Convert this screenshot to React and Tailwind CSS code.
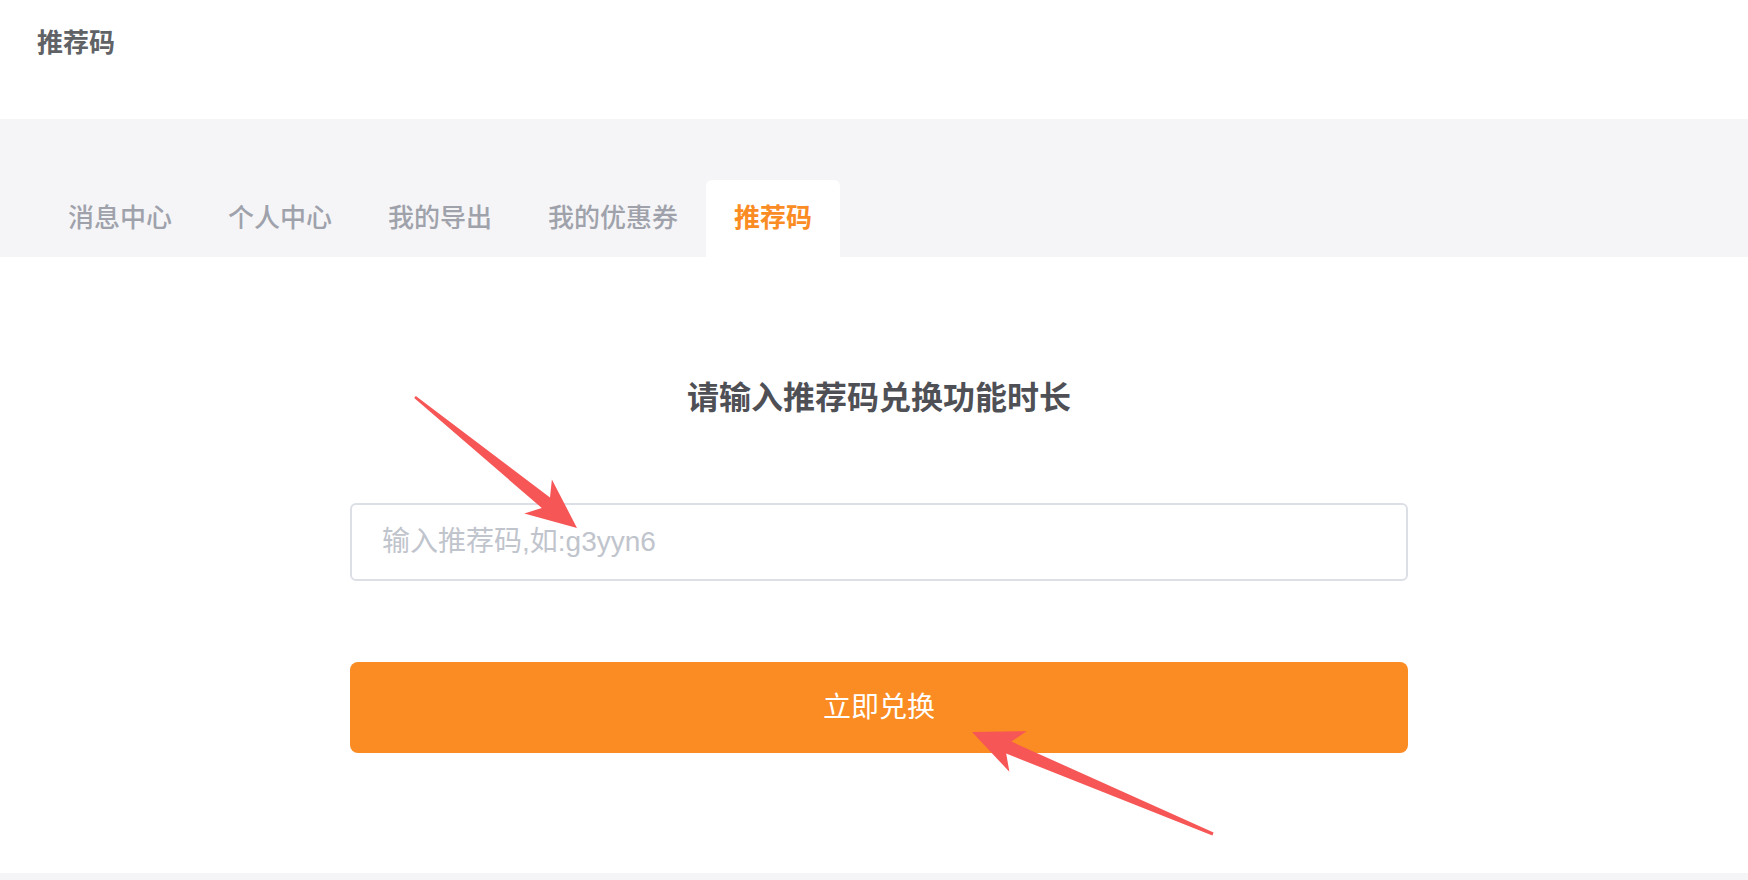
import { useState } from "react";

const tabs = ["消息中心", "个人中心", "我的导出", "我的优惠券", "推荐码"];

function Arrows() {
  // red annotation arrows drawn over the page
  return (
    <svg className="absolute inset-0 pointer-events-none" width="1748" height="880" viewBox="0 0 1748 880">
      <polygon
        fill="#f75656"
        points="414.2,398.1 541.8,508 524.3,513.6 577,528 551.9,479.4 550,497.6 415.8,395.9"
      />
      <polygon
        fill="#f75656"
        points="1213.6,832.6 1011.4,741.6 1026.6,731.2 972,732 1009.4,771.8 1006.2,753.6 1212.4,835.4"
      />
    </svg>
  );
}

export default function App() {
  const [active, setActive] = useState(4);
  const [code, setCode] = useState("");

  return (
    <div className="relative w-full min-h-[880px] bg-[#f5f5f7] font-['Liberation_Sans','Noto_Sans_CJK_SC',sans-serif]">
      {/* Header */}
      <div className="h-[119px] bg-white pl-[37px] pt-[28px]">
        <h1 className="text-[26px] leading-[30px] font-semibold text-[#606266]">推荐码</h1>
      </div>

      {/* Tabs */}
      <div className="h-[138px] bg-[#f5f5f7] pl-[40px] flex items-end">
        {tabs.map((t, i) => (
          <button
            key={t}
            onClick={() => setActive(i)}
            className={
              i === active
                ? "h-[77px] px-[28px] flex items-center text-[26px] font-semibold text-[#fa8c23] bg-white rounded-t-[6px]"
                : "h-[77px] px-[28px] flex items-center text-[26px] font-medium text-[#9fa2ab]"
            }
          >
            {t}
          </button>
        ))}
      </div>

      {/* Content */}
      <div className="h-[616px] bg-white flex justify-center pl-[10px]">
        <div className="w-[1058px] flex flex-col items-center pt-[121px]">
          <h2 className="text-[32px] leading-[40px] font-bold text-[#4f5055]">请输入推荐码兑换功能时长</h2>
          <input
            value={code}
            onChange={(e) => setCode(e.target.value)}
            placeholder="输入推荐码,如:g3yyn6"
            className="mt-[85px] w-full h-[78px] border-2 border-[#dcdfe6] rounded-[6px] px-[30px] text-[28px] text-[#606266] placeholder:text-[#c0c4cc] outline-none"
          />
          <button className="mt-[81px] w-full h-[91px] rounded-[8px] bg-[#fa8c23] text-white text-[28px] font-normal">
            立即兑换
          </button>
        </div>
      </div>

      <Arrows />
    </div>
  );
}
